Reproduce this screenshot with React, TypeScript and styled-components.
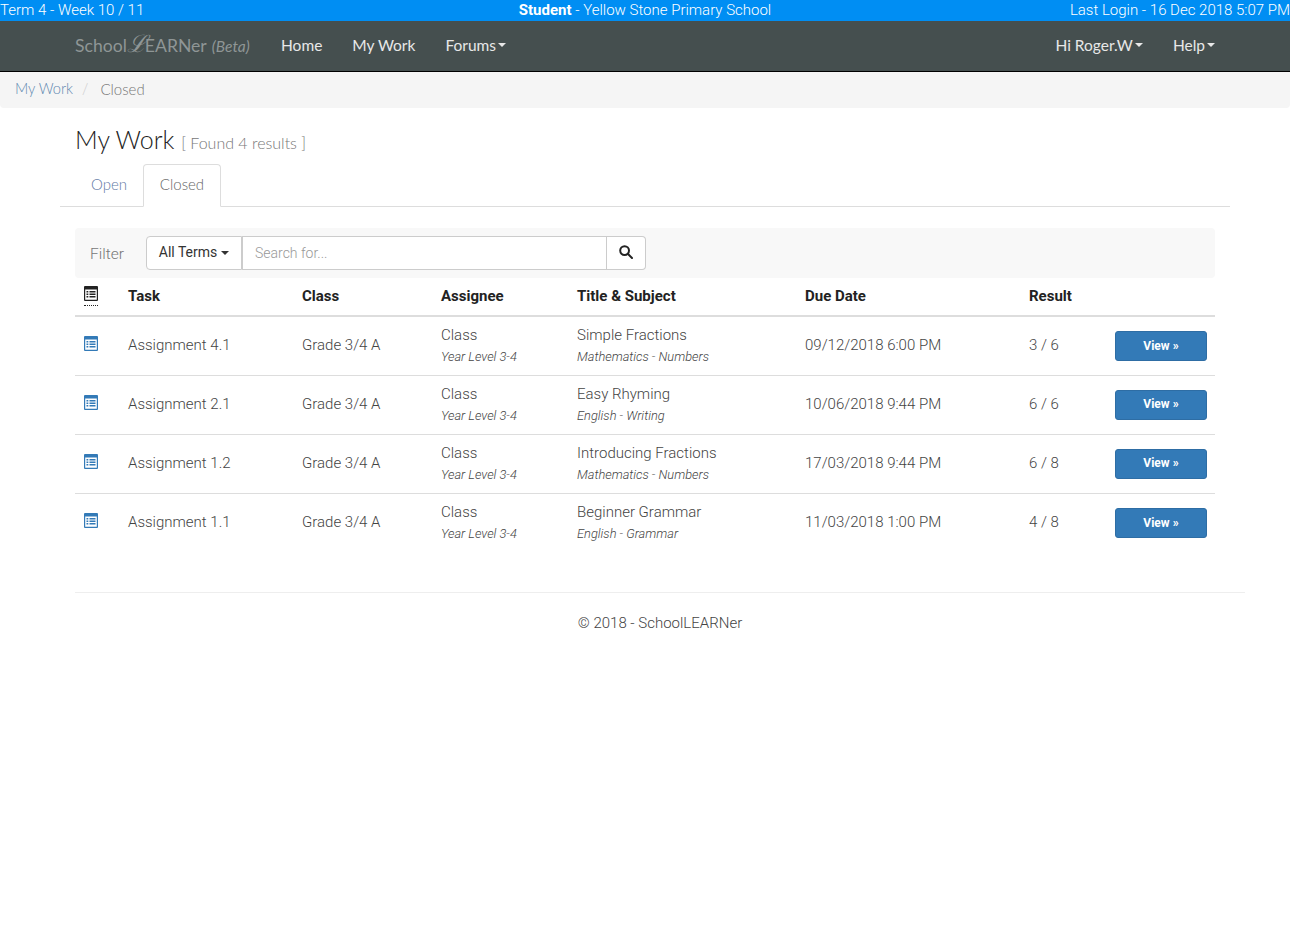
import React from "react";
import styled, { createGlobalStyle } from "styled-components";

const Global = createGlobalStyle`
  html, body { margin: 0; padding: 0; background: #fff; }
  body { font-family: Roboto, "Liberation Sans", sans-serif; font-weight: 300; font-size: 15px; color: #333; line-height: 1.42857; }
  * { box-sizing: border-box; }
`;
const display = `Lato, "Open Sans", sans-serif`;

const TopBar = styled.div`
  height: 21px; background: #008ef3; color: #fff; display: grid; grid-template-columns: 1fr auto 1fr;
  font-size: 15px; font-weight: 300; line-height: 20px; white-space: nowrap;
  & > :last-child { text-align: right; }
  b { font-weight: 700; }
`;
const Navbar = styled.nav`
  height: 51px; background: #454f4f; border-bottom: 1px solid #000; padding: 0 45px 2px 75px; display: flex; align-items: center;
  font-family: ${display}; font-size: 15.5px; color: #e8e8e8; font-weight: 400;
`;
const Brand = styled.div`
  width: 206px; font-size: 17.6px; color: #8f9696; font-weight: 400; white-space: nowrap; display: flex; align-items: baseline;
  i { font-size: 15.5px; margin-left: 5px; }
`;
const ScriptL = styled.span`
  font-family: "Liberation Serif", serif; font-style: italic; font-size: 24px; line-height: 1; margin: 0 -2px 0 0;
`;
const NavItem = styled.a`
  margin-right: 30px; display: inline-flex; align-items: center; white-space: nowrap;
`;
const Caret = styled.span<{ $color?: string }>`
  display: inline-block; width: 0; height: 0; margin-left: 2px; vertical-align: middle;
  border-top: 4px solid ${(p) => p.$color || "#e8e8e8"}; border-left: 4px solid transparent; border-right: 4px solid transparent;
`;
const Spacer = styled.div`flex: 1;`;
const Crumbs = styled.div`
  height: 36px; background: #f5f5f5; border-radius: 0 0 4px 4px; padding: 0 15px 1px; display: flex; align-items: center;
  font-size: 14.6px; color: #777; font-family: ${display};
  a { color: #6088b0; }
  span.sep { color: #ccc; margin: 0 12px 0 9px; }
  span.current { font-size: 15px; }
`;
const Container = styled.main`width: 1170px; margin: 0 auto;`;
const Title = styled.h1`
  margin: 0; padding: 15px 15px 0; height: 56px; font-family: ${display}; font-weight: 300; font-size: 25px; line-height: 32px; color: #222;
  small { font-size: 16px; color: #777; }
`;
const Tabs = styled.div`
  height: 43px; display: flex; padding-left: 15px; border-bottom: 1px solid #ddd; font-family: ${display}; font-size: 15px;
`;
const Tab = styled.a<{ $active?: boolean }>`
  height: 43px; padding: 0 0 2px; display: flex; align-items: center; color: ${(p) => (p.$active ? "#666" : "#5f7aa5")};
  border: 1px solid ${(p) => (p.$active ? "#ddd" : "transparent")};
  border-bottom: 1px solid ${(p) => (p.$active ? "#fff" : "transparent")};
  border-radius: 4px 4px 0 0; width: ${(p) => (p.$active ? "78px" : "68px")}; justify-content: center;
`;
const Panel = styled.div`padding: 21px 15px 0;`;
const FilterBar = styled.div`
  height: 50px; background: #f8f8f8; border-radius: 4px; padding: 8px 15px; display: flex; align-items: center; color: #777; font-size: 15.5px;
`;
const FilterLabel = styled.span`width: 56px; font-weight: 300; padding-top: 2px;`;
const TermBtn = styled.div`
  width: 96px; height: 34px; background: #fff; border: 1px solid #ccc; border-radius: 4px 0 0 4px; color: #333; font-size: 14px; font-weight: 400;
  display: flex; align-items: center; justify-content: center;
  span { margin-left: 4px; }
`;
const Search = styled.input`
  width: 365px; height: 34px; border: 1px solid #ccc; border-left-width: 1px; padding: 0 12px; font: 300 14px Roboto, sans-serif; outline: none;
  &::placeholder { color: #999; opacity: 1; }
`;
const SearchBtn = styled.div`
  width: 39px; height: 34px; background: #fff; border: 1px solid #ccc; border-left: 0; border-radius: 0 4px 4px 0; display: flex; align-items: center; justify-content: center; padding-bottom: 2px;
`;
const Table = styled.table`
  width: 1140px; table-layout: fixed; border-collapse: collapse; font-size: 15px; color: #444;
`;
const Col = styled.col<{ $w: number }>`width: ${(p) => p.$w}px;`;
const Th = styled.th`
  height: 38px; padding: 0 8px; text-align: left; font-weight: 700; font-size: 15px; color: #222; border-bottom: 2px solid #ddd;
`;
const IconTh = styled(Th)`padding-left: 9px;`;
const Row = styled.tr`
  height: 59px; border-bottom: 1px solid #ddd;
  &:last-child { border-bottom: 0; }
`;
const Td = styled.td`padding: 0 8px; vertical-align: middle;`;
const IconCell = styled(Td)`padding: 2px 0 0 9px;`;
const Sub = styled.div`font-size: 12.8px; font-style: italic; line-height: 17px; margin-top: 3px; padding-bottom: 1px; white-space: nowrap;`;
const Main = styled.div`line-height: 20px; white-space: nowrap;`;
const ViewBtn = styled.a`
  display: flex; align-items: center; justify-content: center; width: 92px; height: 30px; padding-top: 1px; background: #337ab7; border: 1px solid #2e6da4; border-radius: 3px;
  color: #fff; font-size: 12px; font-weight: 700;
`;
const DottedIcon = styled.span`
  display: inline-block; border-bottom: 1px dotted #222; height: 20px; line-height: 0;
`;
const Footer = styled.footer`
  margin: 40px 0 0 75px; width: 1170px; border-top: 1px solid #eee; padding-top: 20px; text-align: center; font-size: 15px; color: #444; line-height: 21px;
`;

const ListIcon = ({ color }: { color: string }) => (
  <svg width="14" height="15" viewBox="0 0 14 15">
    <path fill={color} fillRule="evenodd" d="M1 0h12a1 1 0 0 1 1 1v13a1 1 0 0 1-1 1H1a1 1 0 0 1-1-1V1a1 1 0 0 1 1-1zM1.2 3.5v10.3h11.6V3.500z" />
    <path fill={color} d="M2.500 5h1.800v1.500H2.500zM5.500 5h6v1.500h-6zM2.500 7.500h1.800V9H2.500zM5.500 7.500h6V9h-6zM2.500 10h1.800v1.500H2.500zM5.500 10h6v1.500h-6z" />
  </svg>
);

const rows = [
  ["Assignment 4.1", "Simple Fractions", "Mathematics - Numbers", "09/12/2018 6:00 PM", "3 / 6"],
  ["Assignment 2.1", "Easy Rhyming", "English - Writing", "10/06/2018 9:44 PM", "6 / 6"],
  ["Assignment 1.2", "Introducing Fractions", "Mathematics - Numbers", "17/03/2018 9:44 PM", "6 / 8"],
  ["Assignment 1.1", "Beginner Grammar", "English - Grammar", "11/03/2018 1:00 PM", "4 / 8"],
];
const widths = [45, 174, 139, 136, 228, 224, 86, 108];

export default function App() {
  return (
    <>
      <Global />
      <TopBar>
        <div>Term 4 - Week 10 / 11</div>
        <div><b>Student</b> - Yellow Stone Primary School</div>
        <div>Last Login - 16 Dec 2018 5:07 PM</div>
      </TopBar>
      <Navbar>
        <Brand>School<ScriptL>ℒ</ScriptL>EARNer <i>(Beta)</i></Brand>
        <NavItem>Home</NavItem>
        <NavItem>My Work</NavItem>
        <NavItem>Forums<Caret /></NavItem>
        <Spacer />
        <NavItem>Hi Roger.W<Caret /></NavItem>
        <NavItem>Help<Caret /></NavItem>
      </Navbar>
      <Crumbs><a>My Work</a><span className="sep">/</span><span className="current">Closed</span></Crumbs>
      <Container>
        <Title>My Work <small>[ Found 4 results ]</small></Title>
        <Tabs>
          <Tab>Open</Tab>
          <Tab $active>Closed</Tab>
        </Tabs>
        <Panel>
          <FilterBar>
            <FilterLabel>Filter</FilterLabel>
            <TermBtn>All Terms <Caret $color="#333" /></TermBtn>
            <Search placeholder="Search for..." />
            <SearchBtn>
              <svg width="14" height="14" viewBox="0 0 14 14" fill="none" stroke="#222" strokeWidth="2">
                <circle cx="5.6" cy="5.6" r="4.4" />
                <path d="M8.8 8.8 13 13" strokeLinecap="round" />
              </svg>
            </SearchBtn>
          </FilterBar>
          <Table>
            <colgroup>{widths.map((w, i) => <Col key={i} $w={w} />)}</colgroup>
            <thead>
              <tr>
                <IconTh><DottedIcon><ListIcon color="#222" /></DottedIcon></IconTh>
                <Th>Task</Th><Th>Class</Th><Th>Assignee</Th><Th>Title &amp; Subject</Th><Th>Due Date</Th><Th>Result</Th><Th />
              </tr>
            </thead>
            <tbody>
              {rows.map((r) => (
                <Row key={r[0]}>
                  <IconCell><ListIcon color="#337ab7" /></IconCell>
                  <Td>{r[0]}</Td>
                  <Td>Grade 3/4 A</Td>
                  <Td><Main>Class</Main><Sub>Year Level 3-4</Sub></Td>
                  <Td><Main>{r[1]}</Main><Sub>{r[2]}</Sub></Td>
                  <Td>{r[3]}</Td>
                  <Td>{r[4]}</Td>
                  <Td><ViewBtn>View »</ViewBtn></Td>
                </Row>
              ))}
            </tbody>
          </Table>
        </Panel>
      </Container>
      <Footer>© 2018 - SchoolLEARNer</Footer>
    </>
  );
}
